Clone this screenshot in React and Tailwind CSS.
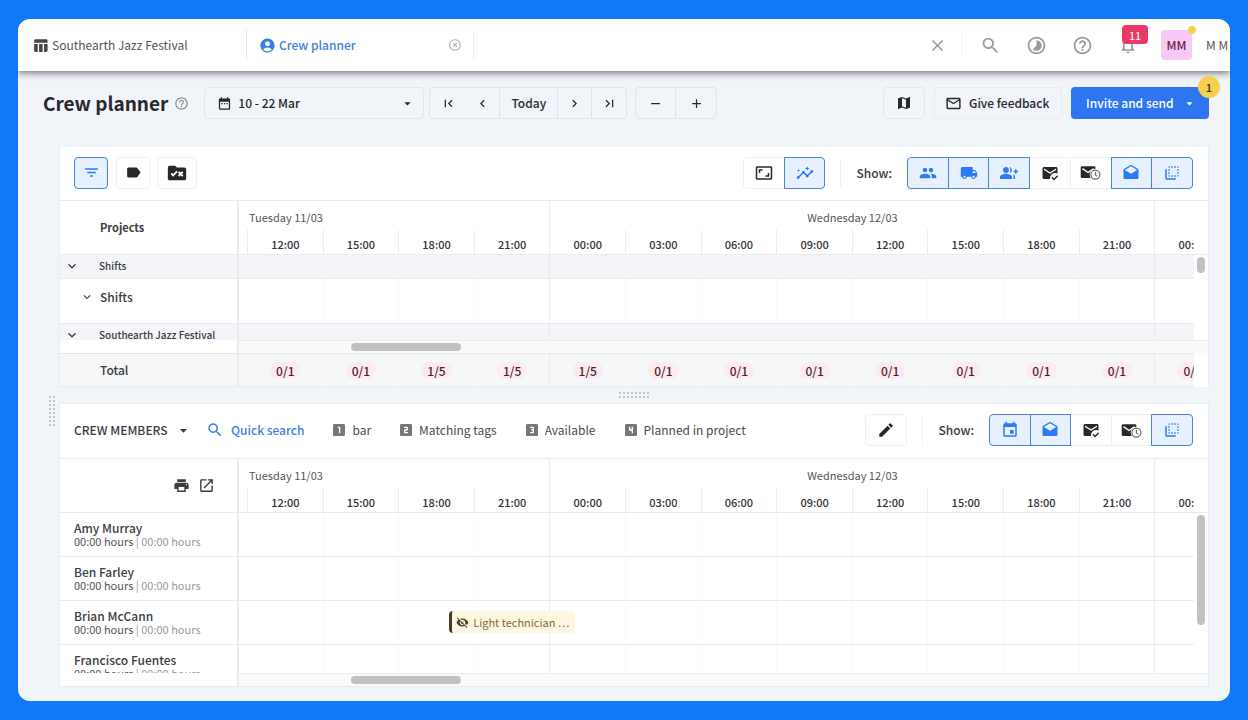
import React from "react";
import clsx from "clsx";
import {
  MdAccountCircle,
  MdAdd,
  MdArrowDropDown,
  MdAspectRatio,
  MdChevronLeft,
  MdChevronRight,
  MdClose,
  MdDateRange,
  MdDrafts,
  MdEdit,
  MdEvent,
  MdExpandMore,
  MdFilterList,
  MdFirstPage,
  MdFlipToBack,
  MdGroupAdd,
  MdHelpOutline,
  MdHighlightOff,
  MdInsights,
  MdLabel,
  MdLastPage,
  MdLocalShipping,
  MdLooks3,
  MdLooks4,
  MdLooksOne,
  MdLooksTwo,
  MdMailOutline,
  MdMap,
  MdMarkEmailRead,
  MdNotificationsNone,
  MdOpenInNew,
  MdPeople,
  MdPrint,
  MdRemove,
  MdRuleFolder,
  MdSearch,
  MdTableChart,
  MdTimelapse,
  MdVisibilityOff,
} from "react-icons/md";

const hours = [
  "12:00",
  "15:00",
  "18:00",
  "21:00",
  "00:00",
  "03:00",
  "06:00",
  "09:00",
  "12:00",
  "15:00",
  "18:00",
  "21:00",
  "00:00",
];

const totals = [
  "0/1",
  "0/1",
  "1/5",
  "1/5",
  "1/5",
  "0/1",
  "0/1",
  "0/1",
  "0/1",
  "0/1",
  "0/1",
  "0/1",
  "0/1",
];

const crew = ["Amy Murray", "Ben Farley", "Brian McCann", "Francisco Fuentes"];

const savedFilters = [
  { label: "bar", icon: MdLooksOne },
  { label: "Matching tags", icon: MdLooksTwo },
  { label: "Available", icon: MdLooks3 },
  { label: "Planned in project", icon: MdLooks4 },
];

// last column of each day
const isDayEnd = (index) => index === 3 || index === 11;

const MailClock = () => (
  <svg viewBox="0 0 30 24" className="h-[17px] w-[21px]" fill="none">
    <rect x="1" y="3" width="21" height="17" rx="2" fill="currentColor" />
    <path d="M3.500 6.500 11.500 12l8-5.500" stroke="white" strokeWidth="2" />
    <circle cx="22" cy="15" r="8.200" fill="white" />
    <circle cx="22" cy="15" r="6.500" stroke="#6b6b6b" strokeWidth="1.700" />
    <path d="M22 11v4.500l2.800 2" stroke="#6b6b6b" strokeWidth="1.600" />
  </svg>
);

const DragHandle = ({ vertical }) => (
  <svg
    viewBox={vertical ? "0 0 6 30" : "0 0 30 6"}
    className={vertical ? "h-[30px] w-[6px]" : "h-[6px] w-[30px]"}
    fill="#c3c7cc"
  >
    {Array.from({ length: 8 }, (_, i) => (
      <g key={i}>
        <rect x={vertical ? 0 : i * 4} y={vertical ? i * 4 : 0} width="2" height="2" />
        <rect x={vertical ? 4 : i * 4} y={vertical ? i * 4 : 4} width="2" height="2" />
      </g>
    ))}
  </svg>
);

const ToggleGroup = ({ items, className }) => (
  <div className={clsx("flex", className)}>
    {items.map(({ label, icon: Icon, active }) => (
      <button
        key={label}
        type="button"
        aria-label={label}
        aria-pressed={active}
        className={clsx(
          "-ml-px flex h-8 flex-1 items-center justify-center border first:ml-0 first:rounded-l-sm last:rounded-r-sm",
          active
            ? "relative border-[#4c83d4] bg-[#e6f1fd] text-[#2d7bf4]"
            : "border-[#eceef0] text-[#26282b]"
        )}
      >
        <Icon size={18} />
      </button>
    ))}
  </div>
);

const NavButton = ({ label, className, children }) => (
  <button
    type="button"
    aria-label={label}
    className={clsx(
      "flex items-center justify-center border-r border-[#dfe3e8] last:border-r-0",
      className
    )}
  >
    {children}
  </button>
);

const Columns = () => (
  <colgroup>
    <col className="w-[179px]" />
    <col className="w-[9px]" />
    {hours.map((_, i) => (
      <col key={i} />
    ))}
  </colgroup>
);

const TimelineTable = ({ children }) => (
  <table className="w-full min-w-[1171px] table-fixed border-separate border-spacing-0">
    <Columns />
    {children}
  </table>
);

const TimelineHead = ({ children }) => (
  <thead>
    <tr>
      <th
        rowSpan={2}
        className="border-r-2 border-b border-[#e9ebed] p-0 text-left"
      >
        {children}
      </th>
      <th
        colSpan={5}
        className="h-[29px] border-r border-[#e9ebed] p-0 pt-0.5 pl-[10px] text-left text-[11px] font-normal text-[#555]"
      >
        Tuesday 11/03
      </th>
      <th
        colSpan={8}
        className="border-r border-[#e9ebed] p-0 pt-0.5 text-center text-[11px] font-normal text-[#555]"
      >
        Wednesday 12/03
      </th>
      <th className="p-0" />
    </tr>
    <tr>
      <td className="h-[25px] border-r border-b border-[#e9ebed] p-0" />
      {hours.map((hour, i) => (
        <th
          key={i}
          className="border-r border-b border-[#e9ebed] p-0 pt-1 text-center text-[11px] font-medium text-[#333]"
        >
          {hour}
        </th>
      ))}
    </tr>
  </thead>
);

const TimelineCells = ({ className, render }) => (
  <>
    <td className={clsx("border-b border-[#e9ebed] p-0", className)} />
    {hours.map((_, i) => (
      <td
        key={i}
        className={clsx(
          "relative border-r border-b border-b-[#e9ebed] p-0 text-center",
          isDayEnd(i) ? "border-r-[#e9ebed]" : "border-r-[#f8f9fa]",
          className
        )}
      >
        {render && render(i)}
      </td>
    ))}
  </>
);

const GroupRow = ({ label }) => (
  <tr>
    <th className="h-6 border-r-2 border-b border-[#e9ebed] bg-[#f4f5f8] p-0 text-left font-medium">
      <div className="flex items-center pb-0.5 pl-1 text-[10px]">
        <button type="button" aria-label={`Collapse ${label}`}>
          <MdExpandMore size={16} />
        </button>
        <span className="pl-[19px]">{label}</span>
      </div>
    </th>
    <TimelineCells className="bg-[#f4f5f8]" />
  </tr>
);

const HorizontalScrollbar = () => (
  <div className="flex h-[13px]">
    <div className="w-[179px] border-r-2 border-[#e9ebed]" />
    <div className="flex flex-1 items-center border-t border-[#e9ebed] bg-[#fafafa] pl-28">
      <div className="h-2 w-[110px] rounded-full bg-[#c1c1c1]" />
    </div>
  </div>
);

const ScrollGutter = ({ thumb }) => (
  <div className="w-[14px]">
    <div className="h-[54px] border-b border-[#e9ebed]" />
    <div className={clsx("mx-auto mt-[2px] w-2 rounded-full bg-[#c1c1c1]", thumb)} />
  </div>
);

const TopBar = () => (
  <header className="relative z-10 flex h-[52px] items-center overflow-hidden rounded-t-xl bg-white pl-[14px] text-[#9a9a9a]">
    <nav className="flex h-[30px] items-center text-[12px]">
      <a
        href="#project"
        className="flex h-full w-[215px] items-center gap-[3px] border-r border-[#e8e8e8] text-[#555]"
      >
        <MdTableChart size={17} className="text-[#444]" />
        Southearth Jazz Festival
      </a>
      <div className="flex h-full w-[227px] items-center border-r border-[#efefef] pl-3 pr-[11px]">
        <a
          href="#crew"
          className="flex flex-1 items-center gap-[3px] font-medium text-[#3a7fe0]"
        >
          <MdAccountCircle size={17} />
          Crew planner
        </a>
        <button type="button" aria-label="Close tab">
          <MdHighlightOff size={14} className="text-[#b5b5b5]" />
        </button>
      </div>
    </nav>
    <div className="ml-auto flex items-center">
      <button type="button" aria-label="Close">
        <MdClose size={19} />
      </button>
      <div className="mx-[14px] h-6 border-r border-[#f0f0f0]" />
      <div className="mr-[23px] ml-1 flex items-center gap-[25px]">
        <button type="button" aria-label="Search">
          <MdSearch size={21} />
        </button>
        <button type="button" aria-label="Time">
          <MdTimelapse size={21} />
        </button>
        <button type="button" aria-label="Help">
          <MdHelpOutline size={21} />
        </button>
        <button type="button" aria-label="Notifications" className="relative">
          <MdNotificationsNone size={20} />
          <span className="absolute -top-[10px] left-1 flex h-[19px] w-[26px] items-center justify-center rounded-sm bg-[#e83a64] text-[11px] text-white">
            11
          </span>
        </button>
      </div>
      <div className="relative flex h-[30px] w-[31px] items-center justify-center rounded-sm bg-[#f8c8f6] text-[12px] font-medium text-[#6b2548]">
        MM
        <span className="absolute -top-1 -right-1 h-2 w-2 rounded-full bg-[#f7cf4d]" />
      </div>
      <span className="ml-[14px] w-6 overflow-hidden text-[12px] whitespace-nowrap text-[#555]">
        M M
      </span>
    </div>
  </header>
);

const PageHeader = () => (
  <div className="flex items-center pt-4 pr-[21px] pl-[25px] text-[#26282b]">
    <h1 className="text-[19px] font-bold">Crew planner</h1>
    <MdHelpOutline size={15} className="ml-[6px] text-[#8b8f94]" />
    <label className="relative ml-[15px] flex h-8 w-[220px] items-center rounded-sm border border-[#e3e7ec] pl-3">
      <MdDateRange size={15} />
      <select
        aria-label="Period"
        className="ml-[6px] h-full flex-1 appearance-none bg-transparent text-[12px] font-medium"
      >
        <option>10 - 22 Mar</option>
      </select>
      <MdArrowDropDown
        size={15}
        className="pointer-events-none absolute right-2"
      />
    </label>
    <div className="ml-[5px] flex h-8 rounded-sm border border-[#dfe3e8]">
      <NavButton label="First" className="w-9 border-r-0">
        <MdFirstPage size={15} />
      </NavButton>
      <NavButton label="Previous" className="w-[34px]">
        <MdChevronLeft size={15} />
      </NavButton>
      <NavButton label="Today" className="w-[58px] text-[12px] font-medium">
        Today
      </NavButton>
      <NavButton label="Next" className="w-[34px]">
        <MdChevronRight size={15} />
      </NavButton>
      <NavButton label="Last" className="w-[34px]">
        <MdLastPage size={15} />
      </NavButton>
    </div>
    <div className="ml-2 flex h-8 rounded-sm border border-[#dfe3e8]">
      <NavButton label="Zoom out" className="w-10">
        <MdRemove size={15} />
      </NavButton>
      <NavButton label="Zoom in" className="w-10">
        <MdAdd size={15} />
      </NavButton>
    </div>
    <div className="ml-auto flex items-center gap-[9px]">
      <button
        type="button"
        aria-label="Map"
        className="flex h-8 w-[42px] items-center justify-center rounded-sm border border-[#e3e7ec]"
      >
        <MdMap size={16} />
      </button>
      <button
        type="button"
        className="flex h-8 w-[128px] items-center gap-[7px] rounded-sm border border-[#e8ebef] pl-[10px] text-[12px] font-medium"
      >
        <MdMailOutline size={17} />
        Give feedback
      </button>
      <button
        type="button"
        className="relative flex h-8 w-[138px] items-center justify-between rounded-sm bg-[#2e76f0] pr-3 pl-[15px] text-[12px] font-medium text-white"
      >
        Invite and send
        <MdArrowDropDown size={15} />
        <span className="absolute -top-[11px] -right-[11px] flex h-[22px] w-[22px] items-center justify-center rounded-full bg-[#f7cf4d] text-[11px] text-[#333]">
          1
        </span>
      </button>
    </div>
  </div>
);

const ProjectsPanel = () => (
  <section className="border-x border-[#e9ebed] bg-white">
    <div className="flex h-[54px] items-center border-b border-[#e9ebed] pr-[15px] pb-0.5 pl-[14px]">
      <button
        type="button"
        aria-label="Filter"
        className="flex h-8 w-[34px] items-center justify-center rounded-sm border border-[#4c83d4] bg-[#e6f1fd] text-[#2d7bf4]"
      >
        <MdFilterList size={17} />
      </button>
      <button
        type="button"
        aria-label="Tags"
        className="ml-2 flex h-8 w-[34px] items-center justify-center rounded-sm border border-[#eceef0] text-[#26282b]"
      >
        <MdLabel size={17} />
      </button>
      <button
        type="button"
        aria-label="Project status"
        className="ml-[7px] flex h-8 w-10 items-center justify-center rounded-sm border border-[#eceef0] text-[#26282b]"
      >
        <MdRuleFolder size={22} />
      </button>
      <div className="ml-auto flex items-center">
        <ToggleGroup
          className="w-[82px]"
          items={[
            { label: "Fit to screen", icon: MdAspectRatio, active: false },
            { label: "Insights", icon: MdInsights, active: true },
          ]}
        />
        <div className="mx-[15px] h-7 border-r border-[#eceef0]" />
        <span className="mr-[15px] text-[12px] font-medium">Show:</span>
        <ToggleGroup
          className="w-[286px]"
          items={[
            { label: "Crew", icon: MdPeople, active: true },
            { label: "Transport", icon: MdLocalShipping, active: true },
            { label: "Open positions", icon: MdGroupAdd, active: true },
            { label: "Confirmed", icon: MdMarkEmailRead, active: false },
            { label: "Pending", icon: MailClock, active: false },
            { label: "Drafts", icon: MdDrafts, active: true },
            { label: "Overlap", icon: MdFlipToBack, active: true },
          ]}
        />
      </div>
    </div>
    <div className="flex h-[139px]">
      <div className="min-w-0 flex-1 overflow-hidden">
        <TimelineTable>
          <TimelineHead>
            <div className="pb-0.5 pl-10 text-[11px] font-bold">Projects</div>
          </TimelineHead>
          <tbody>
            <GroupRow label="Shifts" />
            <tr>
              <th className="h-[45px] border-r-2 border-b border-[#e9ebed] p-0 text-left align-top font-medium">
                <div className="flex items-center pt-[9px] pl-5 text-[12px]">
                  <button type="button" aria-label="Collapse shifts">
                    <MdExpandMore size={14} />
                  </button>
                  <span className="pl-[6px]">Shifts</span>
                </div>
              </th>
              <TimelineCells />
            </tr>
            <GroupRow label="Southearth Jazz Festival" />
          </tbody>
        </TimelineTable>
      </div>
      <ScrollGutter thumb="h-4" />
    </div>
    <HorizontalScrollbar />
    <div className="mr-[14px] overflow-hidden border-t border-[#e3e5e7]">
      <TimelineTable>
        <tbody>
          <tr>
            <th className="h-[33px] border-r-2 border-b border-[#e9ebed] bg-[#f6f7f9] p-0 pl-10 text-left text-[12px] font-medium">
              Total
            </th>
            <TimelineCells
              className="bg-[#f6f7f9]"
              render={(i) => (
                <span className="rounded-lg bg-[#fcebf0] px-[6px] text-[12px] font-medium text-[#4f1d2b]">
                  {totals[i]}
                </span>
              )}
            />
          </tr>
        </tbody>
      </TimelineTable>
    </div>
  </section>
);

const CrewPanel = () => (
  <section className="border border-[#e9ebed] bg-white">
    <div className="flex h-[55px] items-center border-b border-[#e9ebed] pr-[15px] pb-0.5 pl-[14px] text-[12px]">
      <label className="relative flex w-[118px] items-center">
        <select
          aria-label="Resource type"
          className="w-full appearance-none bg-transparent font-medium"
        >
          <option>CREW MEMBERS</option>
        </select>
        <MdArrowDropDown
          size={17}
          className="pointer-events-none absolute right-0"
        />
      </label>
      <button
        type="button"
        className="ml-[14px] flex items-center gap-[7px] font-medium text-[#3a7fe0]"
      >
        <MdSearch size={18} />
        Quick search
      </button>
      {savedFilters.map(({ label, icon: Icon }) => (
        <button
          key={label}
          type="button"
          className="ml-[27px] flex items-center gap-[5px] text-[#4a4a4a]"
        >
          <Icon size={16} className="text-[#777]" />
          {label}
        </button>
      ))}
      <div className="ml-auto flex items-center">
        <button
          type="button"
          aria-label="Edit filters"
          className="flex h-8 w-[42px] items-center justify-center rounded-sm border border-[#eceef0] text-[#26282b]"
        >
          <MdEdit size={18} />
        </button>
        <div className="mx-[15px] h-7 border-r border-[#f0f1f3]" />
        <span className="mr-[15px] font-medium">Show:</span>
        <ToggleGroup
          className="w-[204px]"
          items={[
            { label: "Availability", icon: MdEvent, active: true },
            { label: "Drafts", icon: MdDrafts, active: true },
            { label: "Confirmed", icon: MdMarkEmailRead, active: false },
            { label: "Pending", icon: MailClock, active: false },
            { label: "Overlap", icon: MdFlipToBack, active: true },
          ]}
        />
      </div>
    </div>
    <div className="flex h-[214px]">
      <div className="min-w-0 flex-1 overflow-hidden">
        <TimelineTable>
          <TimelineHead>
            <div className="flex justify-end gap-2 pr-[22px]">
              <button type="button" aria-label="Print">
                <MdPrint size={17} />
              </button>
              <button type="button" aria-label="Open in new window">
                <MdOpenInNew size={17} />
              </button>
            </div>
          </TimelineHead>
          <tbody>
            {crew.map((name) => (
              <tr key={name}>
                <th className="h-11 border-r-2 border-b border-[#e9ebed] p-0 pl-[14px] text-left font-normal">
                  <div className="text-[12px] leading-[14px] font-medium">
                    {name}
                  </div>
                  <div className="text-[11px] leading-[13px] text-[#555]">
                    00:00 hours{" "}
                    <span className="text-[#9a9a9a]">| 00:00 hours</span>
                  </div>
                </th>
                <TimelineCells
                  render={(i) =>
                    name === "Brian McCann" &&
                    i === 2 && (
                      <div className="absolute top-[10px] left-[50px] z-10 flex h-[22px] w-[126px] items-center gap-1 rounded-sm border-l-3 border-[#4a3a2c] bg-[#fdf6e0] pl-1 text-[11px] whitespace-nowrap text-[#7c6f47]">
                        <MdVisibilityOff size={13} className="text-[#4a3f22]" />
                        Light technician …
                      </div>
                    )
                  }
                />
              </tr>
            ))}
          </tbody>
        </TimelineTable>
      </div>
      <ScrollGutter thumb="h-[110px]" />
    </div>
    <HorizontalScrollbar />
  </section>
);

const App = () => {
  return (
    <div
      className="flex min-h-screen flex-col bg-[#1178f6] px-[18px] py-[19px] leading-[18px] text-[#3a3c3f]"
      style={{ fontFamily: '"Noto Sans CJK SC", "Open Sans", sans-serif' }}
    >
      <div className="flex-1 overflow-hidden rounded-xl bg-[#f1f4f9]">
        <div className="shadow-[0_1px_8px_rgba(0,0,0,0.65)]">
          <TopBar />
        </div>
        <PageHeader />
        <main className="mt-7 flex pr-[21px] pb-[14px]">
          <div className="flex w-[41px] items-center justify-end pr-1 pb-3">
            <DragHandle vertical />
          </div>
          <div className="min-w-0 flex-1">
            <ProjectsPanel />
            <div className="flex h-4 items-center justify-center">
              <DragHandle />
            </div>
            <CrewPanel />
          </div>
        </main>
      </div>
    </div>
  );
};

export default App;
